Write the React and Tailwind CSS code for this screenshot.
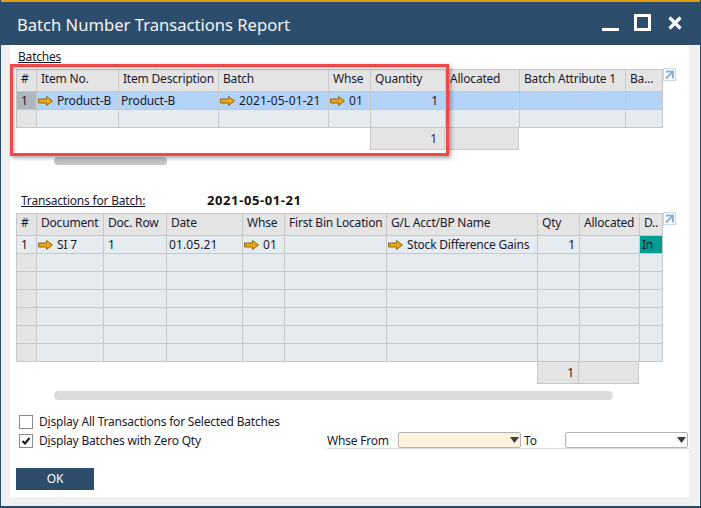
const Arrow = () => (
    <svg className="w-[15px] h-[10px] shrink-0" viewBox="0 0 15 10">
        <path d="M0.5 3H8.5V0.5L14.5 5L8.500 9.500V7H0.5Z" fill="#eea50f" stroke="#8a6a1c" strokeWidth="1" />
    </svg>
);

const Corner = () => (
    <svg className="absolute w-[13px] h-[13px] left-[647px] -top-px" viewBox="0 0 13 13">
        <rect x="0.5" y="0.5" width="12" height="12" fill="#fff" stroke="#c5d8ea" />
        <path d="M3 3.500H10V10.500M10 3.500L3 10.500" fill="none" stroke="#8fb0d6" strokeWidth="2" />
    </svg>
);

const cell = 'flex items-center px-[4px] border-r border-b border-[#c8c8c8] overflow-hidden whitespace-nowrap';
const headCell = `${cell} pb-[3px]`;

const Link = ({ text, digits }) => (
    <>
        <Arrow />
        <span className={digits ? 'ml-[4px] tracking-[0.1px]' : 'ml-[4px]'}>{text}</span>
    </>
);

const Batches = () => {
    const cols = 'grid grid-cols-[20px_82px_100px_110px_42px_75px_74px_106px_37px]';
    const head = ['#', 'Item No.', 'Item Description', 'Batch', 'Whse', 'Quantity', 'Allocated', 'Batch Attribute 1', 'Ba...'];
    return (
        <div className="relative ml-[16px] mt-[3px] w-[676px]">
            <div className="w-[647px] border-t border-l border-[#c8c8c8]">
                <div className={`${cols} h-[22px] bg-[#e4e4e4]`}>
                    {head.map((h) => (
                        <div key={h} className={headCell}>{h}</div>
                    ))}
                </div>
                <div className={`${cols} h-[18px] bg-[#b3d3f9]`}>
                    <div className={`${cell} bg-[#aeb6bf]`}>1</div>
                    <div className={`${cell} pl-[1px]`}><Link text="Product-B" /></div>
                    <div className={`${cell} pl-[2px]`}>Product-B</div>
                    <div className={`${cell} pl-[1px]`}><Link text="2021-05-01-21" digits /></div>
                    <div className={`${cell} pl-[1px]`}><Link text="01" digits /></div>
                    <div className={`${cell} justify-end pr-[7px]`}>1</div>
                    <div className={cell} />
                    <div className={cell} />
                    <div className={cell} />
                </div>
                <div className={`${cols} h-[18px] bg-[#e6ebef]`}>
                    <div className={`${cell} bg-[#e4e4e4]`} />
                    {[1, 2, 3, 4, 5, 6, 7, 8].map((n) => (
                        <div key={n} className={cell} />
                    ))}
                </div>
            </div>
            <div className="flex ml-[354px] h-[22px] w-[149px] bg-[#e4e4e4]">
                <div className={`${cell} w-[75px] justify-end pr-[7px] border-l text-[#3a2038]`}>1</div>
                <div className={`${cell} w-[74px]`} />
            </div>
            <Corner />
        </div>
    );
};

const Transactions = () => {
    const cols = 'grid grid-cols-[20px_67px_63px_76px_42px_102px_151px_42px_60px_23px]';
    const head = ['#', 'Document', 'Doc. Row', 'Date', 'Whse', 'First Bin Location', 'G/L Acct/BP Name', 'Qty', 'Allocated', 'D..'];
    return (
        <div className="relative ml-[16px] w-[676px]">
            <div className="w-[647px] border-t border-l border-[#c8c8c8]">
                <div className={`${cols} h-[22px] bg-[#e4e4e4]`}>
                    {head.map((h) => (
                        <div key={h} className={headCell}>{h}</div>
                    ))}
                </div>
                <div className={`${cols} h-[18px] bg-[#e6ebef]`}>
                    <div className={cell}>1</div>
                    <div className={`${cell} pl-[1px]`}><Link text="SI 7" /></div>
                    <div className={cell}>1</div>
                    <div className={`${cell} pl-[2px] tracking-[0.1px]`}>01.05.21</div>
                    <div className={`${cell} pl-[1px]`}><Link text="01" digits /></div>
                    <div className={cell} />
                    <div className={`${cell} pl-[1px]`}><Link text="Stock Difference Gains" /></div>
                    <div className={`${cell} justify-end`}>1</div>
                    <div className={cell} />
                    <div className={`${cell} bg-[#009c94] pl-[2px]`}>In</div>
                </div>
                {[1, 2, 3, 4, 5, 6].map((r) => (
                    <div key={r} className={`${cols} h-[18px] bg-[#e6ebef]`}>
                        <div className={`${cell} bg-[#e4e4e4]`} />
                        {[1, 2, 3, 4, 5, 6, 7, 8, 9].map((n) => (
                            <div key={n} className={cell} />
                        ))}
                    </div>
                ))}
            </div>
            <div className="flex ml-[521px] h-[22px] w-[102px] bg-[#e4e4e4]">
                <div className={`${cell} w-[42px] justify-end border-l text-[#3a2038]`}>1</div>
                <div className={`${cell} w-[60px]`} />
            </div>
            <Corner />
        </div>
    );
};

const Combo = ({ tint }) => (
    <div className={`relative w-[123px] h-[16px] border border-[#b4b4b4] rounded-[2px] ${tint}`}>
        <svg className="absolute right-[1px] top-[4px] w-[9px] h-[6px]" viewBox="0 0 9 6">
            <path d="M0 0H9L4.500 6Z" fill="#3c3c3c" />
        </svg>
    </div>
);

const Check = ({ checked, hint }) => (
    <div className="flex items-center h-[19px]">
        <div className="flex justify-center items-center w-[14px] h-[14px] border border-[#8c8c8c] bg-white">
            {checked && (
                <svg className="w-[10px] h-[10px]" viewBox="0 0 10 10">
                    <path d="M1.500 5L4 7.500L8.500 2" fill="none" stroke="#1a1a1a" strokeWidth="2" />
                </svg>
            )}
        </div>
        <span className="ml-[6px]">
            D<span className="underline">i</span>{hint}
        </span>
    </div>
);

export default function App() {
    return (
        <div className="relative w-[701px] h-[508px] bg-[#f0f0f0] border-x border-b-2 border-[#2d4d6d] overflow-hidden text-[12px] text-[#1a1a2e] font-['Noto_Sans','Open_Sans',sans-serif] tracking-[-0.2px]">
            <div className="flex items-start -mx-px h-[45px] bg-[#2d4d6d] border-t-2 border-[#e09e0f]">
                <h1 className="ml-[17px] mt-[11px] text-[16.6px] leading-[24px] font-normal text-[#f2f5f8] tracking-normal">
                    Batch Number Transactions Report
                </h1>
                <div className="flex items-start ml-auto text-white">
                    <div className="w-[17px] h-[3px] mt-[26px] bg-white" />
                    <div className="w-[17px] h-[17px] mt-[12px] ml-[15px] border-[3px] border-white" />
                    <svg className="w-[14px] h-[14px] mt-[14px] ml-[17px] mr-[19px]" viewBox="0 0 14 14">
                        <path d="M1.500 1.500L12.500 12.500M12.500 1.500L1.500 12.500" stroke="#fff" strokeWidth="3.200" />
                    </svg>
                </div>
            </div>

            <div className="ml-[10px] mr-[10px] h-[452px] bg-white flex flex-col -translate-x-px">
                <div className="ml-[8px] mt-[2px] h-[19px] leading-[19px]">
                    <span className="underline">Batches</span>
                </div>
                <div className="-ml-[10px]">
                    <Batches />
                </div>
                <div className="ml-[44px] mt-[7px] w-[113px] h-[8px] rounded-full bg-[#c4c4c4]" />

                <div className="flex items-center ml-[11px] mt-[27px] h-[18px]">
                    <span className="underline w-[186px]">Transactions for Batch:</span>
                    <span className="font-bold text-[13px] tracking-[0.6px] text-[#111]">2021-05-01-21</span>
                </div>
                <div className="-ml-[10px] mt-[3px]">
                    <Transactions />
                </div>
                <div className="ml-[44px] mt-[7px] w-[559px] h-[9px] rounded-full bg-[#dcdcdc]" />

                <div className="flex flex-col ml-[9px] mt-[12px]">
                    <Check hint="splay All Transactions for Selected Batches" />
                    <Check checked hint="splay Batches with Zero Qty" />
                </div>
                <div className="flex items-center ml-[6px] mt-[18px] w-[78px] h-[22px] justify-center bg-[#2d4d6d] text-white">
                    OK
                </div>
            </div>

            {/* whse filter sits beside the checkboxes */}
            <div className="absolute left-[326px] top-[432px] flex items-end border-b border-[#dcdcdc] w-[362px]">
                <span className="w-[71px] leading-[15px]">Whse From</span>
                <Combo tint="bg-[#fdf3dc]" />
                <span className="ml-[3px] w-[41px] leading-[15px]">To</span>
                <Combo tint="bg-white" />
            </div>

            {/* red annotation round the first grid */}
            <div className="absolute left-[9px] top-[64px] w-[439px] h-[92px] border-[3px] border-[#f04848] shadow-[2px_2px_4px_rgba(0,0,0,0.35),inset_2px_2px_3px_rgba(0,0,0,0.2)]" />
        </div>
    );
}
